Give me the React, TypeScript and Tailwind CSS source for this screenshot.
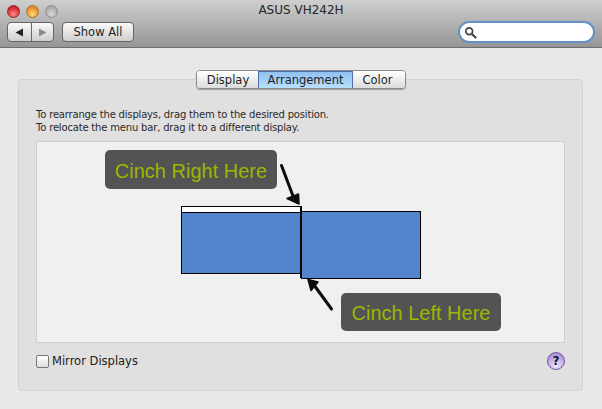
const uiFont = "font-['DejaVu_Sans',sans-serif]"

function ArrowRightDown() {
  return (
    <svg className="absolute left-[277px] top-[163px]" width="30" height="50" viewBox="0 0 30 50" fill="none">
      <path d="M4.5 2.5 L16 33" stroke="#0c0c0c" strokeWidth="3" strokeLinecap="round" />
      <path d="M10 35.5 L21.5 31 L22 41 Z" fill="#0c0c0c" stroke="#0c0c0c" strokeWidth="1.5" strokeLinejoin="round" />
    </svg>
  )
}

function ArrowLeftUp() {
  return (
    <svg className="absolute left-[302px] top-[274px]" width="34" height="40" viewBox="0 0 34 40" fill="none">
      <path d="M29.5 35 L12 11" stroke="#0c0c0c" strokeWidth="3" strokeLinecap="round" />
      <path d="M6 5.5 L16 8 L9 16.5 Z" fill="#0c0c0c" stroke="#0c0c0c" strokeWidth="1.5" strokeLinejoin="round" />
    </svg>
  )
}

function Callout({ label, className }: { label: string; className: string }) {
  return (
    <div
      className={`absolute flex items-center justify-center rounded-[5px] bg-[#535353] pt-[2px] font-['Liberation_Sans',sans-serif] text-[20px] text-[#9cb800] shadow-[0_0_1px_rgba(255,255,255,0.8)] ${className}`}
    >
      {label}
    </div>
  )
}

function Toolbar() {
  return (
    <header className="h-[48px] border-b border-[#6e6e6e] bg-gradient-to-b from-[#cfcfcf] to-[#969696]">
      <div className="relative flex h-[20px] items-center gap-[6px] pl-[7px] pt-[2px]">
        <span className="size-[13px] rounded-full border border-[#8c2b2b] bg-[radial-gradient(circle_at_50%_75%,#ff8a8a,#d3222c_70%)]" />
        <span className="size-[13px] rounded-full border border-[#a8702a] bg-[radial-gradient(circle_at_50%_75%,#ffdc73,#e58a25_70%)]" />
        <span className="size-[13px] rounded-full border border-[#8f8f8f] bg-[radial-gradient(circle_at_50%_75%,#d8d8d8,#a9a9a9_70%)]" />
        <span className="absolute inset-x-0 top-[1px] text-center text-[12px] leading-[18px] text-[#262626]">ASUS VH242H</span>
      </div>
      <div className="flex items-center pl-[7px] pr-[7px] pt-[1px]">
        <div className="flex h-[20px] w-[47px] rounded-[4px] border border-[#666] bg-gradient-to-b from-[#fafafa] to-[#cfcfcf]">
          <span className="flex w-[24px] items-center justify-center border-r border-[#666]">
            <svg width="9" height="9" viewBox="0 0 9 9"><path d="M8 0.5 V8.5 L0.5 4.5 Z" fill="#222" /></svg>
          </span>
          <span className="flex flex-1 items-center justify-center">
            <svg width="9" height="9" viewBox="0 0 9 9"><path d="M1 0.5 V8.5 L8.5 4.5 Z" fill="#8a8a8a" /></svg>
          </span>
        </div>
        <button type="button" className="ml-[8px] h-[20px] w-[72px] rounded-[4px] border border-[#666] bg-gradient-to-b from-[#fafafa] to-[#cfcfcf] text-[11.5px] leading-[18px] text-[#222]">
          Show All
        </button>
        <div className="ml-auto flex h-[22px] w-[137px] items-center rounded-full border-2 border-[#6592c4] bg-white pl-[4px]">
          <svg width="13" height="13" viewBox="0 0 13 13" fill="none">
            <circle cx="5.2" cy="5.2" r="3.4" stroke="#444" strokeWidth="1.7" />
            <path d="M8 8 L11.5 11.5" stroke="#444" strokeWidth="2.2" strokeLinecap="round" />
          </svg>
        </div>
      </div>
    </header>
  )
}

function Tabs() {
  return (
    <div className="relative z-10 mx-auto -mt-[10px] flex h-[19px] w-[210px] overflow-hidden rounded-[4px] border border-[#8a8a8a] text-[11.5px] leading-[18px] text-[#1e1e1e] shadow-[0_1px_1px_rgba(0,0,0,0.3)]">
      <span className="w-[61px] bg-gradient-to-b from-white to-[#dcdcdc] pl-[2px] text-center">Display</span>
      <span className="w-[95px] border-x border-t border-[#4d6fae] bg-gradient-to-b from-[#8fc0f2] to-[#b8dffc] pl-[1px] text-center leading-[17px]">Arrangement</span>
      <span className="flex-1 bg-gradient-to-b from-white to-[#dcdcdc] pr-[2px] text-center">Color</span>
    </div>
  )
}

function Arrangement() {
  return (
    <div className="relative ml-[17px] mr-[17px] mt-[7px] h-[202px] border border-[#cfcfcf] bg-[#f0f0f0]">
      <div className="absolute left-[144px] top-[64px] h-[68px] w-[121px] border border-black bg-[#5285cc]">
        <div className="h-[6px] border-b border-black bg-white" />
      </div>
      <div className="absolute left-[264px] top-[69px] h-[68px] w-[120px] border border-black bg-[#5285cc]" />
      <div className="absolute left-[263px] top-[64px] h-[72px] w-[2px] bg-black" />
    </div>
  )
}

export default function App() {
  return (
    <div className={`relative h-[409px] w-[602px] overflow-hidden bg-[#e8e8e8] ${uiFont}`}>
      <Toolbar />
      <div className="pt-[31px]">
        <section className="ml-[18px] mr-[19px] h-[312px] rounded-[4px] border border-[#d2d2d2] bg-[#e0e0e0]">
          <Tabs />
          <p className="ml-[17px] mt-[19px] text-[10px] leading-[13px] tracking-[-0.18px] text-[#2a2a2a]">
            To rearrange the displays, drag them to the desired position.
            <br />
            To relocate the menu bar, drag it to a different display.
          </p>
          <Arrangement />
          <div className="ml-[17px] mr-[17px] mt-[9px] flex items-center">
            <span className="size-[13px] rounded-[2px] border border-[#777] bg-gradient-to-b from-white to-[#dedede]" />
            <span className="ml-[3px] text-[11.5px] leading-[16px] text-[#222]">Mirror Displays</span>
            <span className="ml-auto flex size-[18px] items-center justify-center rounded-full border border-[#6b5a94] bg-[radial-gradient(circle_at_50%_80%,#efe6ff,#b094e0_75%)] text-[12px] font-bold leading-none text-[#161616]">
              ?
            </span>
          </div>
        </section>
      </div>
      <Callout label="Cinch Right Here" className="left-[105px] top-[150px] h-[39px] w-[172px]" />
      <Callout label="Cinch Left Here" className="left-[341px] top-[293px] h-[38px] w-[160px]" />
      <ArrowRightDown />
      <ArrowLeftUp />
    </div>
  )
}
